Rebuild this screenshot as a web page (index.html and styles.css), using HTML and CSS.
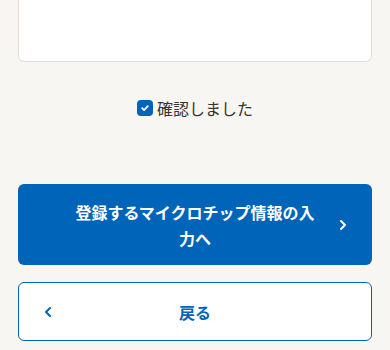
FILE: index.html
```html
<!DOCTYPE html>
<html lang="ja">
<head>
    <meta charset="UTF-8">
    <meta name="viewport" content="width=device-width, initial-scale=1.0">
    <title>確認</title>
    <link rel="stylesheet" href="styles.css">
</head>
<body>
    <main class="page">
        <!-- Terms box (scrolled) -->
        <div class="terms-box"></div>

        <!-- Confirm checkbox -->
        <label class="confirm">
            <span class="confirm-box">
                <svg width="10" height="10" viewBox="0 0 10 10" fill="none" stroke="#fff" stroke-width="1.8" stroke-linecap="round" stroke-linejoin="round">
                    <path d="M2.2 5.2l1.9 1.9 3.7-3.9"/>
                </svg>
            </span>
            <span class="confirm-text">確認しました</span>
        </label>

        <!-- Actions -->
        <button class="btn btn-primary" type="button">
            <span class="btn-icon"></span>
            <span class="btn-label">登録するマイクロチップ情報の入力へ</span>
            <span class="btn-icon">
                <svg width="10" height="12" viewBox="0 0 10 12" fill="none" stroke="currentColor" stroke-width="2" stroke-linecap="round" stroke-linejoin="round">
                    <path d="M3 2l4 4-4 4"/>
                </svg>
            </span>
        </button>

        <button class="btn btn-secondary" type="button">
            <span class="btn-icon">
                <svg width="10" height="12" viewBox="0 0 10 12" fill="none" stroke="currentColor" stroke-width="2" stroke-linecap="round" stroke-linejoin="round">
                    <path d="M7 2L3 6l4 4"/>
                </svg>
            </span>
            <span class="btn-label">戻る</span>
            <span class="btn-icon"></span>
        </button>
    </main>
</body>
</html>
```

FILE: styles.css
```css
* {
    margin: 0;
    padding: 0;
    box-sizing: border-box;
}

body {
    font-family: "Noto Sans CJK JP", "Noto Sans", sans-serif;
    background-color: #f7f6f2;
    color: #333333;
}

.page {
    padding: 0 18px;
    display: flex;
    flex-direction: column;
}

.terms-box {
    height: 62px;
    background: #ffffff;
    border: 1px solid #e2dfda;
    border-top: none;
    border-radius: 0 0 6px 6px;
}

.confirm {
    margin-top: 35px;
    display: flex;
    justify-content: center;
    align-items: center;
    gap: 4px;
    height: 22px;
    font-size: 16px;
    cursor: pointer;
}

.confirm-box {
    width: 16px;
    height: 16px;
    border-radius: 4px;
    background: #0065b8;
    display: flex;
    align-items: center;
    justify-content: center;
}

.confirm-text {
    line-height: 22px;
}

.btn {
    display: grid;
    grid-template-columns: 18px 1fr 18px;
    gap: 18px;
    align-items: center;
    width: 100%;
    padding: 0 20px;
    font-family: inherit;
    font-size: 16px;
    font-weight: bold;
    line-height: 26px;
    border-radius: 6px;
    cursor: pointer;
}

.btn-icon {
    display: flex;
    justify-content: center;
    align-items: center;
}

.btn-label {
    text-align: center;
}

.btn-primary {
    margin-top: 65px;
    min-height: 81px;
    background: #0065b8;
    border: none;
    color: #ffffff;
}

.btn-secondary {
    margin-top: 17px;
    min-height: 59px;
    background: #ffffff;
    border: 1px solid #0065b8;
    color: #0065b8;
}
```
